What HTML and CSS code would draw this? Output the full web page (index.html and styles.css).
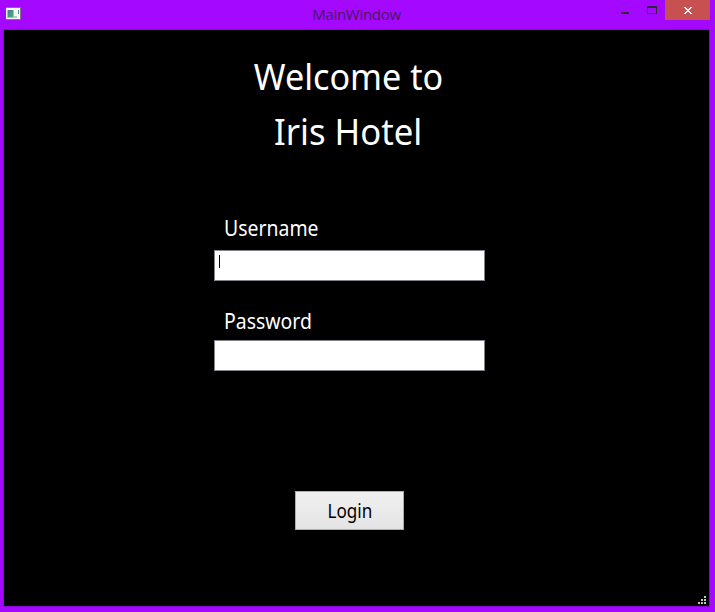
FILE: index.html
```
<!DOCTYPE html>
<html lang="en">
<head>
<meta charset="utf-8">
<title>MainWindow</title>
<link rel="stylesheet" href="styles.css">
</head>
<body>
<div class="window">
  <header class="titlebar">
    <svg class="app-icon" width="15" height="13" viewBox="0 0 15 13" shape-rendering="crispEdges">
      <defs><linearGradient id="pane" x1="0" y1="0" x2="1" y2="1"><stop offset="0" stop-color="#4678a8"/><stop offset="1" stop-color="#4fb06c"/></linearGradient></defs>
      <rect width="15" height="13" fill="#86708f"/>
      <rect x="0" y="1" width="14" height="11" fill="#f7f7f7"/>
      <rect x="1" y="3" width="7" height="8" fill="#9cc3c8"/>
      <rect x="2" y="3" width="5" height="7" fill="url(#pane)"/>
      <rect x="8" y="9" width="3" height="2" fill="#c5c5cc"/>
      <rect x="12" y="3" width="1" height="4" fill="url(#pane)"/>
    </svg>
    <span class="title">MainWindow</span>
    <div class="controls">
      <svg width="110" height="20" viewBox="0 0 110 20" shape-rendering="crispEdges">
        <rect x="16" y="12" width="8" height="2" fill="#2d2730"/>
        <path d="M42 6h10v8H42zM43 8v5h8V8z" fill="#2d2730" fill-rule="evenodd"/>
        <rect x="60" y="0" width="45" height="20" fill="#c75050"/>
        <path d="M79 7h2v1h1v1h2v-1h1v-1h2v1h-1v1h-1v1h-1v1h1v1h1v1h1v1h-2v-1h-1v-1h-2v1h-1v1h-2v-1h1v-1h1v-1h1v-1h-1v-1h-1v-1h-1z" fill="#fff"/>
      </svg>
    </div>
  </header>
  <main class="client">
    <h1 class="heading"><span class="line-one">Welcome to</span><span class="line-two">Iris Hotel</span></h1>
    <form class="form">
      <label class="label user-label" for="user">Username</label>
      <div class="field" id="user"><span class="caret"></span></div>
      <label class="label pass-label" for="pass">Password</label>
      <div class="field" id="pass"></div>
      <button class="login" type="button"><span class="login-text">Login</span></button>
    </form>
    <svg class="grip" width="8" height="8" viewBox="0 0 8 8" shape-rendering="crispEdges" fill="#c4c4c4"><path d="M6 0h2v2H6zM3 3h2v2H3zM6 3h2v2H6zM0 6h2v2H0zM3 6h2v2H3zM6 6h2v2H6z"/></svg>
  </main>
</div>
</body>
</html>
```
FILE: styles.css
```
* { box-sizing: border-box; }
body { margin: 0; font-family: "Noto Sans", sans-serif; }
.window {
  width: 715px;
  height: 612px;
  background: #a508ff;
  padding: 0 5px 5px 3px;
  display: flex;
  flex-direction: column;
}
.titlebar {
  height: 29px;
  display: grid;
  grid-template-columns: 200px 1fr 200px;
  margin-right: -5px;
}
.app-icon { margin: 7px 0 0 3px; }
.title {
  font-family: "Open Sans", sans-serif;
  font-size: 15px;
  line-height: 20px;
  letter-spacing: -0.3px;
  padding-top: 4px;
  color: #44195f;
  text-align: center;
  padding-right: 5px;
}
.controls { display: flex; justify-content: flex-end; }
.client {
  position: relative;
  flex: 1;
  background: #000;
  border: 1px solid #8b06d6;
  display: flex;
  flex-direction: column;
}
.heading {
  margin: 18px 0 0 -16px;
  font-size: 37px;
  font-weight: 400;
  line-height: 55px;
  color: #fff;
  display: flex;
  flex-direction: column;
  align-items: center;
}
.line-one { transform: scaleX(0.924); }
.line-two { transform: scaleX(0.937); }
.form {
  width: 271px;
  margin: 55px 0 0 210px;
  display: flex;
  flex-direction: column;
}
.label {
  height: 30px;
  line-height: 30px;
  font-size: 21px;
  color: #fff;
  margin-left: 10px;
  transform: scaleX(0.925);
  transform-origin: left;
}
.user-label { margin-bottom: 7px; }
.pass-label { margin-top: 25px; margin-bottom: 4px; }
.field {
  height: 31px;
  background: #fff;
  border: 1px solid #82828d;
}
.caret { display: block; width: 1px; height: 13px; margin: 4px 0 0 4px; background: #000; }
.login {
  width: 109px;
  height: 39px;
  margin: 120px 0 0 81px;
  padding: 0;
  border: 1px solid #acacac;
  background: linear-gradient(#f0f0f0, #e4e4e4);
  font-family: inherit;
  font-size: 19px;
  color: #000;
}
.login-text { display: inline-block; transform: scaleX(0.9); }
.grip { position: absolute; right: 3px; bottom: 2px; }
```
